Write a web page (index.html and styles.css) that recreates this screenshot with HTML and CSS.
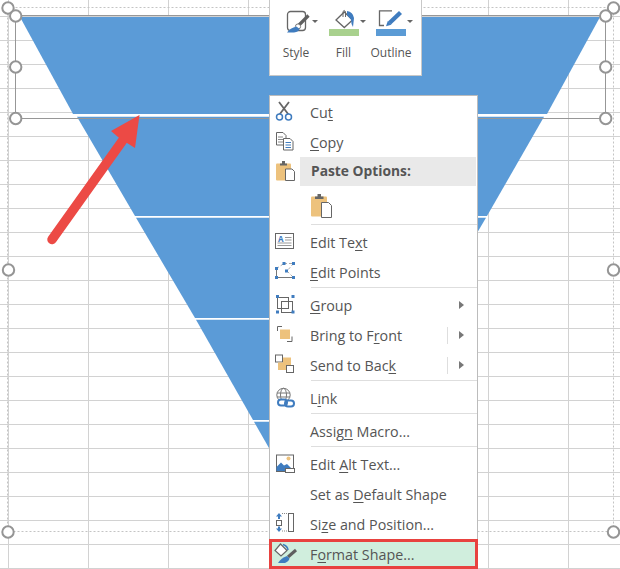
FILE: index.html
```html
<!DOCTYPE html>
<html lang="en">
<head>
  <meta charset="UTF-8">
  <meta name="viewport" content="width=device-width, initial-scale=1.0">
  <title>Format Shape</title>
  <link rel="stylesheet" href="styles.css">
</head>
<body>
  <div class="sheet">
    <!-- worksheet grid, funnel shape, selection handles and arrow -->
    <svg class="canvas" width="620" height="569" viewBox="0 0 620 569">
      <defs>
        <pattern id="cells" x="8" y="16" width="80" height="24" patternUnits="userSpaceOnUse">
          <rect width="1" height="24" fill="#d2d2d2"/>
          <rect width="80" height="1" fill="#d2d2d2"/>
        </pattern>
      </defs>
      <rect width="620" height="569" fill="url(#cells)"/>

      <rect x="7.5" y="7.5" width="606" height="524" class="dash"/>

      <rect x="72" y="114" width="476" height="3" fill="#fff"/>
      <rect x="134" y="216" width="354" height="2" fill="#fff"/>
      <rect x="194" y="318" width="230" height="2" fill="#fff"/>
      <rect x="252" y="420" width="110" height="2" fill="#fff"/>
      <polygon class="band" points="20,17 600,17 547,114 73,114"/>
      <polygon class="band" points="77,116.7 544,116.7 487,216 135,216"/>
      <polygon class="band" points="136,217.8 486,217.8 427,318 195,318"/>
      <polygon class="band" points="196,319.8 426,319.8 368,420 253,420"/>
      <polygon class="band" points="254,421.8 366,421.8 310,520"/>

      <rect x="15.5" y="15.5" width="590" height="103" class="select"/>

      <circle class="handle" cx="8" cy="8" r="5.7"/>
      <circle class="handle" cx="613.5" cy="8" r="5.7"/>
      <circle class="handle" cx="8.5" cy="270" r="5.7"/>
      <circle class="handle" cx="613.5" cy="270" r="5.7"/>
      <circle class="handle" cx="8" cy="532" r="5.7"/>
      <circle class="handle" cx="613.5" cy="532" r="5.7"/>
      <circle class="handle" cx="15.7" cy="16" r="5.7"/>
      <circle class="handle" cx="15.7" cy="67" r="5.7"/>
      <circle class="handle" cx="15.7" cy="118.5" r="5.7"/>
      <circle class="handle" cx="605.7" cy="16" r="5.7"/>
      <circle class="handle" cx="605.7" cy="67" r="5.7"/>
      <circle class="handle" cx="605.7" cy="118.5" r="5.7"/>

      <line x1="52" y1="239.5" x2="123" y2="140" class="arrow-line"/>
      <polygon points="139.5,115 111,131 118,137 127,143 135,148" fill="#ec4a45"/>
    </svg>

    <div class="toolbar">
      <div class="tool">
        <div class="tool-top">
          <svg width="30" height="27" viewBox="0 0 30 27">
            <rect x="6.5" y="2.5" width="18" height="19" rx="3" fill="#fff" stroke="#666" stroke-width="1.3"/>
            <path d="M27.5 6.5 L18 16" stroke="#5f5f5f" stroke-width="3.2"/>
            <circle cx="17" cy="17.5" r="2.6" fill="#fff" stroke="#777"/>
            <path d="M15.5 17.5 Q9 19 6 23.5 H13 Q18 22.5 18.5 20 Z" fill="#3f7cbf"/>
          </svg>
          <span class="caret"></span>
        </div>
        <div class="tool-label"><span>Style</span></div>
      </div>
      <div class="tool">
        <div class="tool-top">
          <svg width="30" height="27" viewBox="0 0 30 27">
            <polygon points="15.3,3 23.5,11 15.3,18.5 7,11" fill="#fff" stroke="#666" stroke-width="1.3"/>
            <path d="M14 8 V2.5 Q15 .5 16.5 2.5 V8" fill="none" stroke="#666"/>
            <path d="M18 2 Q24 3 25 9 L24 18 Q22 15 22 10.5 L18 6 Z" fill="#3f7cbf"/>
            <rect y="20" width="30" height="7" fill="#a9d18e"/>
          </svg>
          <span class="caret"></span>
        </div>
        <div class="tool-label"><span>Fill</span></div>
      </div>
      <div class="tool">
        <div class="tool-top">
          <svg width="30" height="27" viewBox="0 0 30 27">
            <path d="M16 1.8 H3.5 V16.5 H8" fill="none" stroke="#666" stroke-width="1.3"/>
            <path d="M24.5 3.5 L13.5 14" stroke="#3f7cbf" stroke-width="4.4"/>
            <polygon points="11.8,12 15.3,15.7 10,17.2" fill="#3f7cbf"/>
            <rect y="20" width="30" height="7" fill="#5b9bd5"/>
          </svg>
          <span class="caret"></span>
        </div>
        <div class="tool-label"><span>Outline</span></div>
      </div>
    </div>

    <div class="menu">
      <div class="row first">
        <svg class="icon" width="24" height="24" viewBox="0 0 24 24">
          <path d="M6 1 L15.5 13.5 M16 1 L6.5 13.5" stroke="#666" stroke-width="1.8"/>
          <circle cx="6.5" cy="16" r="3" fill="#fff" stroke="#3f7cbf" stroke-width="1.5"/>
          <circle cx="15.5" cy="16" r="3" fill="#fff" stroke="#3f7cbf" stroke-width="1.5"/>
        </svg>
        <span class="label">Cu<u>t</u></span>
      </div>
      <div class="row">
        <svg class="icon" width="24" height="24" viewBox="0 0 24 24">
          <path d="M3.5 1.5 H10 L13 4.5 V14 H3.5 Z" fill="#fff" stroke="#666"/>
          <path d="M5 6 H10 M5 8.5 H10 M5 11 H10" stroke="#888"/>
          <path d="M10.5 7.5 H17 L20 10.5 V19 H10.5 Z" fill="#fff" stroke="#666"/>
          <path d="M12.5 11.5 H18 M12.5 14 H18 M12.5 16.5 H18" stroke="#3f7cbf"/>
        </svg>
        <span class="label"><u>C</u>opy</span>
      </div>
      <div class="row paste-head">
        <svg class="icon" width="24" height="24" viewBox="0 0 24 24">
          <rect x="3" y="3.5" width="15" height="17" rx="1" fill="#edc27d"/>
          <path d="M7 5.5 V3.5 H9 V1 H12 V3.5 H14 V5.5 Z" fill="#666"/>
          <path d="M12.5 9 H19 L21.5 11.5 V20.5 H12.5 Z" fill="#fff" stroke="#666"/>
        </svg>
        <span class="label heading">Paste Options:</span>
      </div>
      <div class="paste-row">
        <svg width="24" height="26" viewBox="0 0 24 26">
          <rect x="2" y="3.5" width="16" height="20" rx="1" fill="#edc27d"/>
          <path d="M6 6 V3.5 H8.5 V1 H12 V3.5 H14.5 V6 Z" fill="#666"/>
          <path d="M12.5 9.5 H19.5 L22.5 12.5 V24.5 H12.5 Z" fill="#fff" stroke="#666"/>
        </svg>
      </div>
      <div class="sep"></div>
      <div class="row">
        <svg class="icon" width="24" height="24" viewBox="0 0 24 24">
          <rect x="2.5" y="2.5" width="18" height="15" fill="#fff" stroke="#666"/>
          <text x="5" y="10.5" class="icon-letter">A</text>
          <path d="M12 6.5 H18.5 M12 9 H18.5 M4.5 12 H18.5 M4.5 14.5 H18.5" stroke="#999"/>
        </svg>
        <span class="label">Edit Te<u>x</u>t</span>
      </div>
      <div class="row">
        <svg class="icon" width="24" height="24" viewBox="0 0 24 24">
          <path d="M3.5 7.5 L11 2.5 M11 2.5 H20.5 M20.5 2.5 L14 10 L20.5 16.5" fill="none" stroke="#aaa" stroke-dasharray="3 2"/>
          <path d="M3.5 7.5 V16.5 H20.5" fill="none" stroke="#777"/>
          <rect x="2" y="6" width="3" height="3" fill="#3f7cbf"/>
          <rect x="9.5" y="1" width="3" height="3" fill="#3f7cbf"/>
          <rect x="19" y="1" width="3" height="3" fill="#3f7cbf"/>
          <rect x="12" y="8.5" width="3" height="3" fill="#3f7cbf"/>
          <rect x="2" y="15" width="3" height="3" fill="#3f7cbf"/>
          <rect x="19" y="15" width="3" height="3" fill="#3f7cbf"/>
        </svg>
        <span class="label"><u>E</u>dit Points</span>
      </div>
      <div class="sep"></div>
      <div class="row">
        <svg class="icon" width="24" height="24" viewBox="0 0 24 24">
          <rect x="4.5" y="3.5" width="11" height="11" fill="none" stroke="#666"/>
          <rect x="8.5" y="7.5" width="11" height="11" fill="none" stroke="#666"/>
          <rect x="3" y="1" width="3" height="3" fill="#3f7cbf"/>
          <rect x="18.5" y="1" width="3" height="3" fill="#3f7cbf"/>
          <rect x="3" y="16.5" width="3" height="3" fill="#3f7cbf"/>
          <rect x="18.5" y="16.5" width="3" height="3" fill="#3f7cbf"/>
        </svg>
        <span class="label"><u>G</u>roup</span>
        <span class="more"></span>
      </div>
      <div class="row">
        <svg class="icon" width="24" height="24" viewBox="0 0 24 24">
          <path d="M4.5 7 V2.5 H9" fill="none" stroke="#666"/>
          <path d="M19 12.5 V17.5 H14" fill="none" stroke="#666"/>
          <rect x="7" y="5.5" width="10" height="9.5" fill="#edc27d"/>
        </svg>
        <span class="label">Bring to F<u>r</u>ont</span>
        <span class="divider"></span>
        <span class="more"></span>
      </div>
      <div class="row">
        <svg class="icon" width="24" height="24" viewBox="0 0 24 24">
          <rect x="2.5" y="1" width="7" height="7" fill="#fff" stroke="#666"/>
          <rect x="10" y="3.5" width="8" height="7.5" fill="#edc27d"/>
          <rect x="5" y="8.5" width="8" height="7.5" fill="#edc27d"/>
          <rect x="13.5" y="11.5" width="7" height="7" fill="#fff" stroke="#666"/>
        </svg>
        <span class="label">Send to Bac<u>k</u></span>
        <span class="divider"></span>
        <span class="more"></span>
      </div>
      <div class="sep"></div>
      <div class="row">
        <svg class="icon" width="24" height="24" viewBox="0 0 24 24">
          <circle cx="10.5" cy="8" r="6.7" fill="#fff" stroke="#777"/>
          <ellipse cx="10.5" cy="8" rx="3" ry="6.7" fill="none" stroke="#777"/>
          <path d="M4 6 H17 M4 10 H17" stroke="#777"/>
          <rect x="5" y="12.5" width="9" height="6" rx="3" fill="#fff" stroke="#3f7cbf" stroke-width="2"/>
          <rect x="12" y="13.5" width="9" height="6" rx="3" fill="none" stroke="#3f7cbf" stroke-width="2"/>
        </svg>
        <span class="label">L<u>i</u>nk</span>
      </div>
      <div class="sep"></div>
      <div class="row">
        <span class="icon-gap"></span>
        <span class="label">Assig<u>n</u> Macro...</span>
      </div>
      <div class="sep"></div>
      <div class="row">
        <svg class="icon" width="24" height="24" viewBox="0 0 24 24">
          <rect x="3.5" y="2" width="17" height="16.5" fill="#fff" stroke="#666"/>
          <circle cx="15.5" cy="5.5" r="2" fill="#edc27d"/>
          <path d="M3.5 18 V14 L8 9.5 L11 12.5 L14 11 L18 15 H12 V18 Z" fill="#3f7cbf"/>
          <rect x="12.5" y="15.5" width="9" height="4" fill="#fff" stroke="#666"/>
        </svg>
        <span class="label">Edit <u>A</u>lt Text...</span>
      </div>
      <div class="row">
        <span class="icon-gap"></span>
        <span class="label">Set as <u>D</u>efault Shape</span>
      </div>
      <div class="row">
        <svg class="icon" width="24" height="24" viewBox="0 0 24 24">
          <polygon points="6,0 9,3.5 7,3.5 7,6 5,6 5,3.5 3,3.5" fill="#3f7cbf"/>
          <rect x="3.5" y="7.5" width="5" height="5" fill="#fff" stroke="#666"/>
          <polygon points="6,19 9,15.5 7,15.5 7,13.5 5,13.5 5,15.5 3,15.5" fill="#3f7cbf"/>
          <path d="M9 .5 H15 M9 18 H15" stroke="#888" stroke-dasharray="1 1"/>
          <rect x="15.5" y="0.5" width="5" height="18" fill="#fff" stroke="#666"/>
        </svg>
        <span class="label">Si<u>z</u>e and Position...</span>
      </div>
      <div class="row active">
        <svg class="icon" width="24" height="24" viewBox="0 0 24 24">
          <polygon points="7.5,1 14,7.5 8,13 2,7.5" fill="#fff" stroke="#666" stroke-width="1.2"/>
          <path d="M10 1.5 Q14.5 3 15 7" fill="none" stroke="#3f7cbf" stroke-width="1.5"/>
          <path d="M23 7 L15 14" stroke="#5f5f5f" stroke-width="3"/>
          <path d="M14 13 Q8 15 5 20 H12 Q16 18 16.5 15.5 Z" fill="#3f7cbf"/>
        </svg>
        <span class="label">F<u>o</u>rmat Shape...</span>
      </div>
    </div>
  </div>
</body>
</html>
```

FILE: styles.css
```css
body {
  margin: 0;
  font-family: "Open Sans", "Liberation Sans", sans-serif;
  color: #555;
}
.sheet {
  position: relative;
  width: 620px;
  height: 569px;
  overflow: hidden;
  background: #fff;
}
.canvas {
  position: absolute;
  left: 0;
  top: 0;
}
.dash {
  fill: none;
  stroke: #c4c4c4;
  stroke-width: 1;
  stroke-dasharray: 2 2;
}
.band {
  fill: #5b9bd7;
}
.select {
  fill: none;
  stroke: #979797;
  stroke-width: 1;
}
.handle {
  fill: #fff;
  stroke: #959595;
  stroke-width: 2;
}
.arrow-line {
  stroke: #ec4a45;
  stroke-width: 9.5;
  stroke-linecap: round;
}

/* mini toolbar */
.toolbar {
  position: absolute;
  left: 269px;
  top: -2px;
  width: 140px;
  height: 66px;
  padding: 10px 0 0 11px;
  display: flex;
  gap: 10.5px;
  background: #fff;
  border: 1px solid #c8c8c8;
}
.tool {
  width: 37px;
}
.tool-top {
  display: flex;
  align-items: flex-start;
  height: 27px;
}
.caret {
  margin: 11px 0 0 1px;
  border-left: 3px solid transparent;
  border-right: 3px solid transparent;
  border-top: 3px solid #666;
}
.tool-label {
  width: 30px;
  display: flex;
  justify-content: center;
  margin-top: 9px;
  font-size: 12px;
  line-height: 16px;
  white-space: nowrap;
}

/* context menu */
.menu {
  position: absolute;
  left: 269px;
  top: 95px;
  width: 207px;
  height: 480px;
  background: #fff;
  border: 1px solid #bcbcbc;
  font-size: 14.3px;
}
.row {
  position: relative;
  display: flex;
  align-items: center;
  height: 30px;
  white-space: nowrap;
}
.row.first {
  margin-top: 2px;
}
.icon {
  flex: none;
  margin-left: 3px;
}
.icon-gap {
  flex: none;
  width: 27px;
}
.label {
  margin-left: 13px;
  padding-bottom: 1px;
}
.label u {
  text-underline-offset: 2px;
}
.icon-letter {
  font-size: 8px;
  font-weight: 700;
  fill: #3f7cbf;
}
.paste-head {
  height: 29px;
  margin-top: -1px;
}
.paste-head .label {
  margin-left: 3px;
  flex: 1;
  height: 29px;
  padding: 0 0 0 11px;
  line-height: 28px;
  background: #e9e9e9;
  margin-right: 1px;
}
.heading {
  font-size: 13.8px;
  font-weight: 700;
}
.paste-row {
  display: flex;
  align-items: center;
  height: 39px;
  padding-left: 39px;
}
.sep {
  height: 1px;
  margin: -1px 0 3px 41px;
  background: #dedede;
}
.more {
  position: absolute;
  left: 189px;
  top: 10px;
  border-left: 5px solid #777;
  border-top: 4px solid transparent;
  border-bottom: 4px solid transparent;
}
.divider {
  position: absolute;
  left: 177px;
  top: 6px;
  width: 1px;
  height: 17px;
  background: #dedede;
}
.active {
  margin: -1px -1px 0;
  height: 30px;
  padding-top: 1px;
  box-sizing: border-box;
  background: #d0eedd;
  border: 3px solid #e8423f;
}
.active .icon {
  margin-left: 1px;
}
```
